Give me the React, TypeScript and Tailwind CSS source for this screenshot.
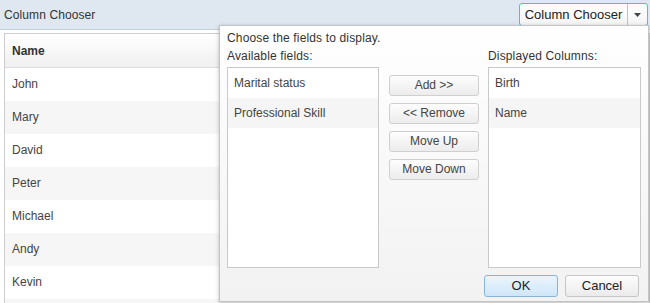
const rows = ["John", "Mary", "David", "Peter", "Michael", "Andy", "Kevin", ""];
const available = ["Marital status", "Professional Skill"];
const displayed = ["Birth", "Name"];

function SideButton({ label }: { label: string }) {
  return (
    <button className="h-[21px] w-[90px] rounded-[3px] border border-[#cfcfcf] bg-gradient-to-b from-[#fdfdfd] to-[#ececec] text-[12px] leading-[19px] text-[#444]">
      {label}
    </button>
  );
}

function FieldList({ items }: { items: string[] }) {
  return (
    <div className="h-[201px] border border-[#c9c9c9] bg-white">
      {items.map((item, i) => (
        <div
          key={item}
          className={`h-[30px] pl-[6px] text-[12px] leading-[30px] text-[#444] ${i % 2 ? "bg-[#f5f5f5]" : "bg-white"}`}
        >
          {item}
        </div>
      ))}
    </div>
  );
}

export default function App() {
  return (
    <div
      className="relative h-[303px] w-[650px] overflow-hidden bg-white"
      style={{ fontFamily: '"Liberation Sans", Arial, sans-serif' }}
    >
      {/* Toolbar */}
      <div className="flex h-[30px] items-center justify-between border-b border-[#c8d0d8] bg-[#dfe8f1] pl-[4px] pr-[2px]">
        <span className="text-[12px] tracking-[0.1px] text-[#333]">Column Chooser</span>
        <div className="flex h-[23px] items-stretch rounded-[3px] border border-[#55b6e8] bg-gradient-to-b from-white to-[#f4f4f4]">
          <span className="flex w-[108px] items-center justify-center border-r border-[#9ccbe6] text-[13px] text-[#222]">
            Column Chooser
          </span>
          <span className="flex w-[19px] items-center justify-center">
            <svg width="7" height="4" viewBox="0 0 7 4">
              <path d="M0 0h7L3.5 4z" fill="#444" />
            </svg>
          </span>
        </div>
      </div>

      {/* Grid */}
      <div className="ml-[4px] mt-[3px] border border-[#cdcdcd]">
        <div className="h-[34px] border-b border-[#dcdcdc] bg-gradient-to-b from-white to-[#f0f0f0] pl-[7px] text-[12px] font-bold leading-[34px] text-[#333]">
          Name
        </div>
        {rows.map((name, i) => (
          <div
            key={i}
            className={`h-[33px] pl-[7px] text-[12px] leading-[33px] text-[#444] ${i % 2 ? "bg-[#f6f6f6]" : "bg-white"}`}
          >
            {name}
          </div>
        ))}
      </div>

      {/* Column chooser popup */}
      <div className="absolute left-[219px] top-[25px] flex h-[277px] w-[430px] flex-col border border-[#c4c4c4] bg-gradient-to-b from-white to-[#f2f2f2] px-[7px] pt-[3px] shadow-[0_1px_4px_rgba(0,0,0,0.25)]">
        <div className="text-[12px] leading-[18px] tracking-[0.15px] text-[#333]">Choose the fields to display.</div>
        <div className="flex">
          <div className="w-[152px]">
            <div className="mb-[2px] text-[12px] leading-[18px] tracking-[0.15px] text-[#333]">Available fields:</div>
            <FieldList items={available} />
          </div>
          <div className="ml-[10px] mt-[28px] flex flex-col gap-[7px]">
            <SideButton label="Add >>" />
            <SideButton label="<< Remove" />
            <SideButton label="Move Up" />
            <SideButton label="Move Down" />
          </div>
          <div className="ml-[9px] w-[153px]">
            <div className="mb-[2px] text-[12px] leading-[18px] tracking-[0.15px] text-[#333]">Displayed Columns:</div>
            <FieldList items={displayed} />
          </div>
        </div>
        <div className="mt-[7px] flex justify-end gap-[7px] pr-[2px]">
          <button className="h-[22px] w-[74px] rounded-[3px] border border-[#86b4d8] bg-gradient-to-b from-[#eaf5fd] to-[#cfe6f8] text-[13px] text-[#222]">
            OK
          </button>
          <button className="h-[22px] w-[74px] rounded-[3px] border border-[#c6c6c6] bg-gradient-to-b from-[#fdfdfd] to-[#ebebeb] text-[13px] text-[#222]">
            Cancel
          </button>
        </div>
      </div>
    </div>
  );
}
